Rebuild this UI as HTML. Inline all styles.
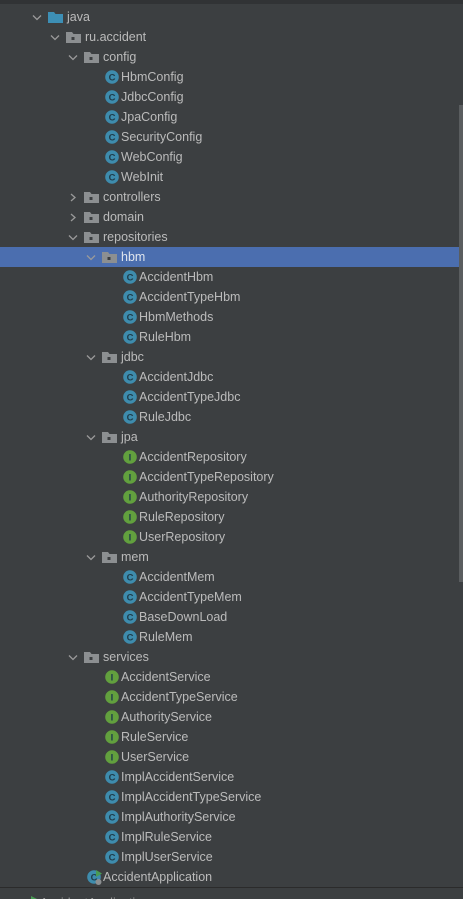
<!DOCTYPE html>
<html><head><meta charset="utf-8"><style>
html,body{margin:0;width:463px;height:899px;overflow:hidden}
body{background:#3c3f41;position:relative;font-family:"Liberation Sans",sans-serif;font-size:12.5px;color:#bbbbbb}
.top{position:absolute;left:0;top:0;width:463px;height:4px;background:#313335}
.r{position:absolute;left:0;width:463px;height:20px;line-height:20px}
.sel{background:#4b6eaf}
.t{position:absolute;top:0;white-space:nowrap}
svg{position:absolute}
.sb{position:absolute;left:459px;top:105px;width:4px;height:477px;background:#5a5d5f}
.sep{position:absolute;left:0;top:887px;width:463px;height:1px;background:#2b2b2b}
</style></head><body>
<div class="top"></div>
<div id="tree"></div>
<div class="sb"></div>
<div class="sep"></div>
<div class="r" style="top:893px"><svg style="left:30px;top:2px" width="8" height="8"><path d="M1 1L7 4L1 7Z" fill="#499c54"/></svg><span class="t" style="left:40px;color:#999">AccidentApplication</span></div>
<script>
var rows=[
[0,'jf','java'],[1,'po','ru.accident'],[2,'po','config'],
[3,'c','HbmConfig'],[3,'c','JdbcConfig'],[3,'c','JpaConfig'],[3,'c','SecurityConfig'],[3,'c','WebConfig'],[3,'c','WebInit'],
[2,'pc','controllers'],[2,'pc','domain'],[2,'po','repositories'],[3,'po','hbm'],
[4,'c','AccidentHbm'],[4,'c','AccidentTypeHbm'],[4,'c','HbmMethods'],[4,'c','RuleHbm'],
[3,'po','jdbc'],[4,'c','AccidentJdbc'],[4,'c','AccidentTypeJdbc'],[4,'c','RuleJdbc'],
[3,'po','jpa'],[4,'i','AccidentRepository'],[4,'i','AccidentTypeRepository'],[4,'i','AuthorityRepository'],[4,'i','RuleRepository'],[4,'i','UserRepository'],
[3,'po','mem'],[4,'c','AccidentMem'],[4,'c','AccidentTypeMem'],[4,'c','BaseDownLoad'],[4,'c','RuleMem'],
[2,'po','services'],[3,'i','AccidentService'],[3,'i','AccidentTypeService'],[3,'i','AuthorityService'],[3,'i','RuleService'],[3,'i','UserService'],
[3,'c','ImplAccidentService'],[3,'c','ImplAccidentTypeService'],[3,'c','ImplAuthorityService'],[3,'c','ImplRuleService'],[3,'c','ImplUserService'],
[2,'a','AccidentApplication']];
var h='';
rows.forEach(function(r,i){
 var L=r[0],ty=r[1],tx=67+18*L,top=7+20*i;
 h+='<div class="r'+(i==12?' sel':'')+'" style="top:'+top+'px">';
 if(ty[0]=='p'||ty=='jf'){
  var ax=37+18*L;
  if(ty=='pc')h+='<svg style="left:'+(ax-4)+'px;top:6px" width="8" height="9"><path d="M2 1L6 4.5L2 8" stroke="#9a9a9a" stroke-width="1.3" fill="none"/></svg>';
  else h+='<svg style="left:'+(ax-5)+'px;top:7px" width="10" height="7"><path d="M1 1.5L5 5.5L9 1.5" stroke="#9a9a9a" stroke-width="1.3" fill="none"/></svg>';
  var fx=48+18*L,col=ty=='jf'?'#3d8fb5':'#8c8f91';
  h+='<svg style="left:'+fx+'px;top:4px" width="16" height="13"><path d="M0 1H6L7.5 3H15V12H0Z" fill="'+col+'"/>'+(ty=='jf'?'':'<rect x="5.5" y="6" width="3" height="3" fill="#3c3f41"/>')+'</svg>';
 } else {
  var cx=tx-9,col=ty=='i'?'#62a03e':'#3e8cad',ch=ty=='i'?'I':'C';
  h+='<svg style="left:'+(cx-7)+'px;top:3px" width="16" height="16"><circle cx="7" cy="7" r="6.8" fill="'+col+'"/><text x="7" y="10.5" text-anchor="middle" font-family="Liberation Sans" font-size="9.5" font-weight="bold" fill="#1e3c4a">'+ch+'</text>'+(ty=='a'?'<path d="M9 0L15 3.5L9 7Z" fill="#499c54"/><circle cx="11.5" cy="12" r="3" fill="#8c8f91"/>':'')+'</svg>';
 }
 h+='<span class="t" style="left:'+tx+'px;'+(i==12?'color:#dfe5ee':'')+'">'+r[2]+'</span></div>';
});
document.getElementById('tree').innerHTML=h;
</script>
</body></html>
